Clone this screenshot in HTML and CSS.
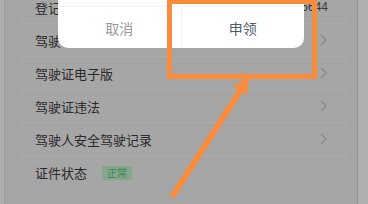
FILE: index.html
```html
<!DOCTYPE html>
<html lang="zh">
<head>
  <meta charset="UTF-8">
  <title>驾驶证</title>
  <link rel="stylesheet" href="styles.css">
</head>
<body>

  <div class="screen">
    <div class="edge-left"></div>
    <div class="main">
      <ul class="list">
        <li class="row"><span>登记编号</span><span class="value">6644</span></li>
        <li class="row"><span>驾驶证申领</span><svg class="chev" viewBox="0 0 7 12"><polyline points="1,1 6,6 1,11"/></svg></li>
        <li class="row"><span>驾驶证电子版</span><svg class="chev" viewBox="0 0 7 12"><polyline points="1,1 6,6 1,11"/></svg></li>
        <li class="row"><span>驾驶证违法</span><svg class="chev" viewBox="0 0 7 12"><polyline points="1,1 6,6 1,11"/></svg></li>
        <li class="row"><span>驾驶人安全驾驶记录</span><svg class="chev" viewBox="0 0 7 12"><polyline points="1,1 6,6 1,11"/></svg></li>
        <li class="row last"><span>证件状态<span class="badge">正常</span></span></li>
      </ul>
    </div>
    <div class="edge-right"></div>

    <div class="dialog">
      <div class="buttons">
        <div class="btn cancel">取消</div>
        <div class="btn ok">申领</div>
      </div>
    </div>

    <div class="mark"></div>
    <svg class="arrow" viewBox="0 0 368 204">
      <line x1="172" y1="197" x2="242" y2="88"/>
      <polygon points="249,77 233,86 247,95"/>
    </svg>
  </div>

</body>
</html>
```

FILE: styles.css
```css
body {
  margin: 0;
  font-family: "Noto Sans CJK SC", "Noto Sans", sans-serif;
  background: #a5a5a5;
}
.screen {
  position: relative;
  width: 368px;
  height: 204px;
  overflow: hidden;
  display: flex;
}
.edge-left {
  width: 4px;
  background: #adadad;
  border-right: 1px solid #9b9b9b;
}
.main {
  flex: 1;
  padding: 0 10px 0 15px;
}
.edge-right {
  width: 10px;
  background: #afafaf;
  border-left: 1px solid #979797;
}
.list {
  margin: -9px 0 0;
  padding: 0;
  list-style: none;
  background: #a6a6a6;
}
.row {
  height: 32px;
  border-bottom: 1px solid #adadad;
  display: flex;
  align-items: center;
  justify-content: space-between;
  padding: 0 20px 0 15px;
  font-size: 13px;
  color: #2a2a2a;
}
.row.last {
  border-bottom: none;
}
.value {
  font-family: "Liberation Sans", sans-serif;
  font-size: 12px;
  color: #3a3a3a;
  margin-right: -1px;
}
.chev {
  width: 7px;
  height: 12px;
  fill: none;
  stroke: #888;
  stroke-width: 1.3;
}
.badge {
  display: inline-block;
  margin-left: 15px;
  padding: 0 5px;
  height: 14px;
  line-height: 14px;
  font-size: 10px;
  vertical-align: 1px;
  background: #84a68d;
  color: #3c8753;
  border-radius: 2px;
}
.dialog {
  position: absolute;
  left: 58px;
  top: -20px;
  width: 246px;
  height: 68px;
  background: #fff;
  border-radius: 0 0 10px 10px;
  display: flex;
  align-items: flex-end;
}
.buttons {
  flex: 1;
  display: flex;
  height: 41px;
  border-top: 1px solid #f1f1f1;
}
.btn {
  flex: 1;
  display: flex;
  align-items: center;
  justify-content: center;
  font-size: 14px;
}
.cancel {
  color: #9a9a9a;
}
.ok {
  color: #4f5b68;
  border-left: 1px solid #f1f1f1;
}
.mark {
  position: absolute;
  left: 167px;
  top: -1px;
  width: 150px;
  height: 80px;
  box-sizing: border-box;
  border: 5px solid #fa8c3c;
}
.arrow {
  position: absolute;
  left: 0;
  top: 0;
  width: 368px;
  height: 204px;
}
.arrow line {
  stroke: #fa8c3c;
  stroke-width: 6;
}
.arrow polygon {
  fill: #fa8c3c;
}
```
